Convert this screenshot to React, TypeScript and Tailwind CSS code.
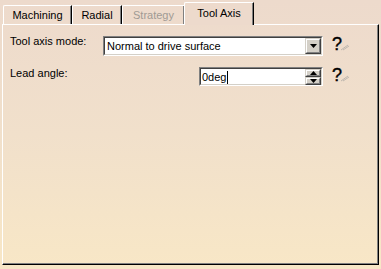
import React from 'react';

function Tab({ label, width, disabled }: { label: string; width: string; disabled?: boolean }) {
  return (
    <div
      className={`${width} h-[19px] flex items-center justify-center border-l border-t border-white border-r border-r-black rounded-tl-[2px] shadow-[inset_-1px_0_#808080] ${
        disabled ? 'text-[#a09a94]' : 'text-black'
      }`}
    >
      {label}
    </div>
  );
}

function Sunken({ width, height, children }: { width: string; height: string; children: React.ReactNode }) {
  return (
    <div className={`${width} ${height} border border-t-[#808080] border-l-[#808080] border-b-white border-r-white`}>
      <div className="w-full h-full border border-t-[#404040] border-l-[#404040] border-b-[#d4d0c8] border-r-[#d4d0c8] bg-white flex items-center">
        {children}
      </div>
    </div>
  );
}

function Raised({ className, children }: { className: string; children: React.ReactNode }) {
  return (
    <div className={`${className} bg-[#d4d0c8] border border-t-[#d4d0c8] border-l-[#d4d0c8] border-b-[#404040] border-r-[#404040]`}>
      <div className="w-full h-full border border-t-white border-l-white border-b-[#808080] border-r-[#808080] flex items-center justify-center">
        {children}
      </div>
    </div>
  );
}

function Help() {
  return (
    <div className="w-[55px] pl-[9px] flex items-start">
      <span className="font-['Liberation_Sans',sans-serif] text-[18px] leading-[17px] text-black [-webkit-text-stroke:0.4px_black]">?</span>
      <svg width="8" height="7" viewBox="0 0 8 7" className="mt-[8px] -ml-[1px]">
        <path d="M0 6 L7 1 M2 6 L8 2" stroke="#bdb6ae" strokeWidth="1" />
      </svg>
    </div>
  );
}

export default function App() {
  return (
    <div className="w-[381px] h-[269px] bg-gradient-to-b from-[#eddacc] via-[#f1e0cb] to-[#f8e7c6] pt-[1px] pl-[2px] font-['Liberation_Sans',Arial,sans-serif] text-[11px] leading-[13px] text-black">
      {/* tabs */}
      <div className="flex items-end h-[23px] pl-[1px]">
        <Tab label="Machining" width="w-[69px]" />
        <Tab label="Radial" width="w-[50px]" />
        <Tab label="Strategy" width="w-[63px]" disabled />
        <div className="relative z-10 -ml-[1px] -mb-px w-[70px] h-[23px] bg-[#eddacc] flex items-center justify-center border-l border-t border-white border-r border-r-black rounded-tl-[2px] shadow-[inset_-1px_0_#808080] pb-[2px]">
          Tool Axis
        </div>
      </div>

      {/* panel */}
      <div className="w-[377px] h-[241px] border-l border-t border-white border-r border-b border-r-black border-b-black shadow-[inset_-1px_-1px_#808080] pl-[7px] pt-[11px]">
        <div className="flex items-start h-[20px]">
          <div className="flex-1 -mt-[1px]">Tool axis mode:</div>
          <Sunken width="w-[220px]" height="h-[20px]">
            <span className="flex-1 pl-[2px] pt-[1px]">Normal to drive surface</span>
            <Raised className="w-[16px] h-[16px]">
              <svg width="7" height="4" viewBox="0 0 7 4">
                <path d="M0 0 H7 L3.5 4 Z" fill="black" />
              </svg>
            </Raised>
          </Sunken>
          <Help />
        </div>

        <div className="flex items-start h-[19px] mt-[11px]">
          <div className="flex-1">Lead angle:</div>
          <Sunken width="w-[124px]" height="h-[19px]">
            <span className="flex-1 pl-[1px] pt-[1px] flex items-center">
              0deg
              <span className="inline-block w-px h-[13px] bg-black ml-[1px]" />
            </span>
            <div className="flex flex-col h-full">
              <Raised className="w-[16px] h-[8px]">
                <svg width="7" height="4" viewBox="0 0 7 4">
                  <path d="M0 4 H7 L3.5 0 Z" fill="black" />
                </svg>
              </Raised>
              <Raised className="w-[16px] h-[9px]">
                <svg width="7" height="4" viewBox="0 0 7 4">
                  <path d="M0 0 H7 L3.5 4 Z" fill="black" />
                </svg>
              </Raised>
            </div>
          </Sunken>
          <Help />
        </div>
      </div>
    </div>
  );
}
